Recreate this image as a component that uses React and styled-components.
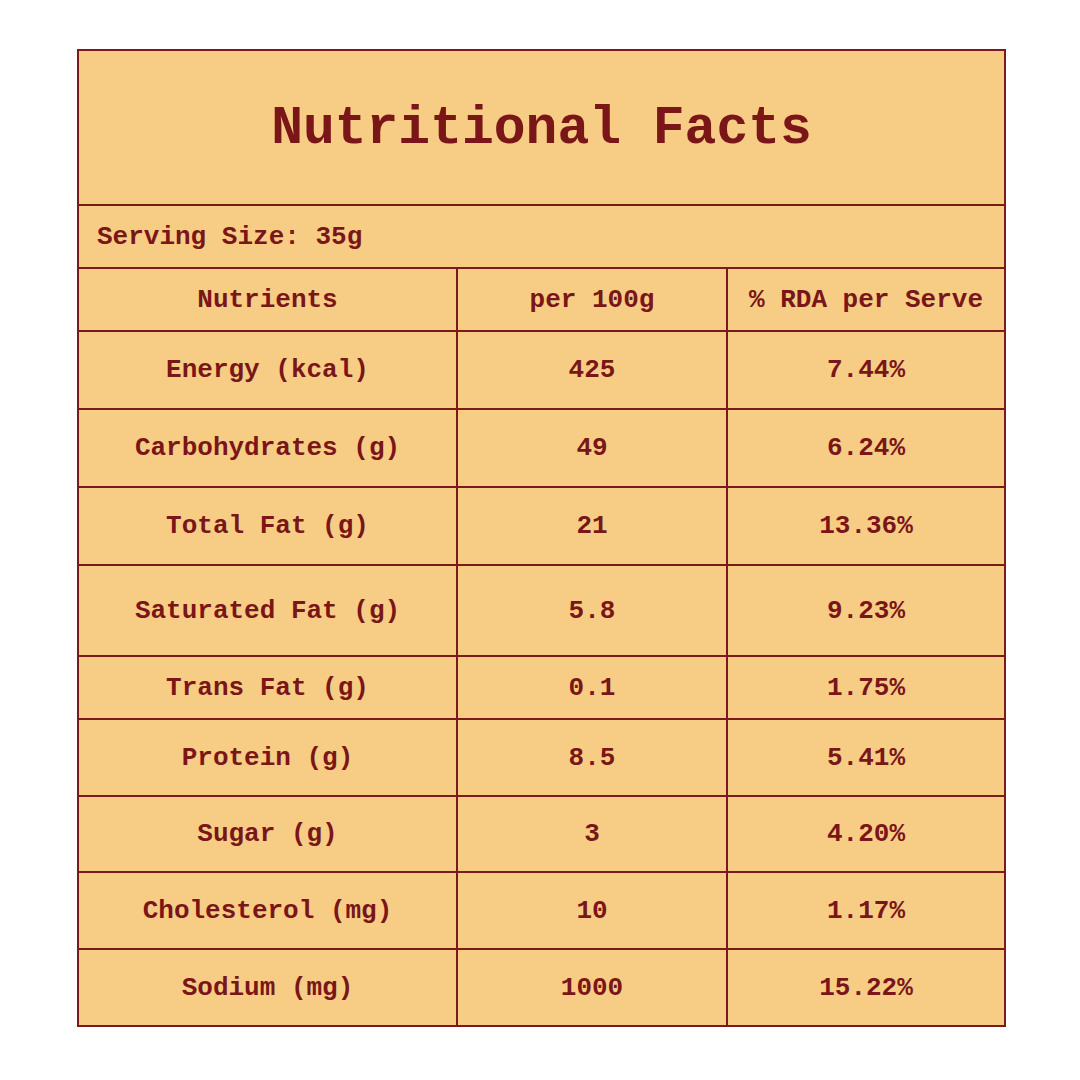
import React from 'react';
import styled, { createGlobalStyle } from 'styled-components';

const GlobalStyle = createGlobalStyle`
  body {
    margin: 0;
    background: #ffffff;
    font-family: "Courier New", "Liberation Mono", monospace;
  }
`;

const ink = '#7a1518';
const line = '#7a1a1a';
const paper = '#f7cd86';

const Page = styled.div`
  width: 1080px;
  height: 1080px;
  padding: 49px 0 0 77px;
  box-sizing: border-box;
`;

const Card = styled.div`
  width: 929px;
  box-sizing: border-box;
  border: 2px solid ${line};
  background: ${paper};
  color: ${ink};
`;

const Title = styled.h1`
  margin: 0;
  height: 153px;
  display: flex;
  align-items: center;
  justify-content: center;
  font-size: 53px;
  font-weight: 700;
  padding-top: 2px;
  box-sizing: border-box;
`;

const Serving = styled.div`
  height: 63px;
  border-top: 2px solid ${line};
  box-sizing: border-box;
  display: flex;
  align-items: center;
  padding-left: 18px;
  font-size: 26px;
  font-weight: 700;
`;

const Row = styled.div`
  display: grid;
  grid-template-columns: 377px 270px 1fr;
  height: ${({ $h }) => $h}px;
  border-top: 2px solid ${line};
  box-sizing: border-box;
`;

const Cell = styled.div`
  display: flex;
  align-items: center;
  justify-content: center;
  font-size: 26px;
  font-weight: 700;
  white-space: pre;
  & + & {
    border-left: 2px solid ${line};
  }
`;

const rows = [
  ['Energy (kcal)', '425', '7.44%', 78],
  ['Carbohydrates (g)', '49', '6.24%', 78],
  ['Total Fat (g)', '21', '13.36%', 78],
  ['Saturated Fat (g)', '5.8', '9.23%', 91],
  ['Trans Fat (g)', '0.1', '1.75%', 63],
  ['Protein (g)', '8.5', '5.41%', 77],
  ['Sugar (g)', '3', '4.20%', 76],
  ['Cholesterol (mg)', '10', '1.17%', 77],
  ['Sodium (mg)', '1000', '15.22%', 77],
];

const App = () => (
  <Page>
    <GlobalStyle />
    <Card>
      <Title>Nutritional Facts</Title>
      <Serving>Serving Size: 35g</Serving>
      <Row $h={63}>
        <Cell>Nutrients</Cell>
        <Cell>per 100g</Cell>
        <Cell>% RDA per Serve</Cell>
      </Row>
      {rows.map(([name, per, rda, h]) => (
        <Row key={name} $h={h}>
          <Cell>{name}</Cell>
          <Cell>{per}</Cell>
          <Cell>{rda}</Cell>
        </Row>
      ))}
    </Card>
  </Page>
);

export default App;
